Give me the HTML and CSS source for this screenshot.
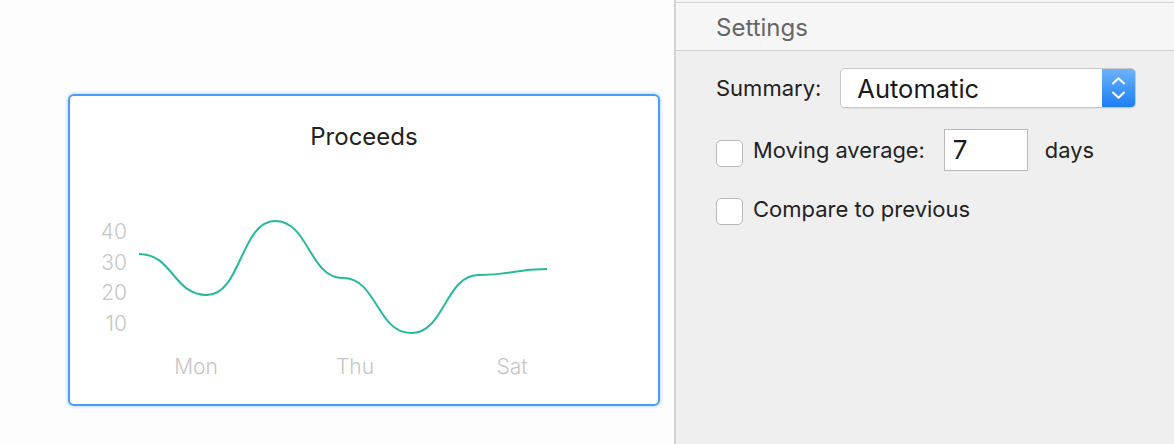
FILE: index.html
```html
<!DOCTYPE html>
<html>
<head>
<meta charset="utf-8">
<link rel="stylesheet" href="styles.css">
</head>
<body>
<div class="app">
  <main class="canvas">
    <section class="card">
      <h2 class="card-title">Proceeds</h2>
      <svg class="chart" width="588" height="253" viewBox="0 0 588 253">
        <g class="y-axis">
          <text x="57" y="88">40</text>
          <text x="57" y="119">30</text>
          <text x="57" y="149">20</text>
          <text x="57" y="180">10</text>
        </g>
        <g class="x-axis">
          <text x="126" y="223">Mon</text>
          <text x="285" y="223">Thu</text>
          <text x="442" y="223">Sat</text>
        </g>
        <path class="line" d="M69,103 C103,103 103,144 137,144 C171,144 171,70 205,70 C239,70 239,127 273,127 C307,127 307,182 341,182 C375,182 375,124 409,124 C443,124 443,118 477,118"/>
      </svg>
    </section>
  </main>
  <aside class="inspector">
    <div class="top-strip"></div>
    <header class="inspector-header">Settings</header>
    <div class="form">
      <div class="row row-summary">
        <span class="label">Summary:</span>
        <div class="popup">
          <span class="popup-value">Automatic</span>
          <span class="popup-arrows">
            <svg width="13" height="22" viewBox="0 0 13 22">
              <path d="M1,6.5 L6.5,1.2 L12,6.5" />
              <path d="M1,15.5 L6.5,20.8 L12,15.5" />
            </svg>
          </span>
        </div>
      </div>
      <div class="row row-average">
        <span class="checkbox"></span>
        <span class="label">Moving average:</span>
        <span class="field">7</span>
        <span class="label days">days</span>
      </div>
      <div class="row row-compare">
        <span class="checkbox"></span>
        <span class="label">Compare to previous</span>
      </div>
    </div>
  </aside>
</div>
</body>
</html>
```
FILE: styles.css
```css
html, body {
  margin: 0;
  padding: 0;
}
body {
  width: 1174px;
  height: 444px;
  overflow: hidden;
  font-family: "Inter", "Liberation Sans", sans-serif;
}
.app {
  display: flex;
  height: 444px;
}
.canvas {
  width: 676px;
  flex: none;
  background: #fdfdfd;
  border-right: 2px solid #d3d3d3;
  padding: 94px 0 0 68px;
  box-sizing: border-box;
}
.card {
  width: 592px;
  height: 312px;
  box-sizing: border-box;
  border: 2px solid #4a9cf6;
  border-radius: 6px;
  background: #fff;
  box-shadow: 0 0 3px 1px rgba(74, 156, 246, 0.35);
}
.card-title {
  margin: 0;
  padding-top: 26px;
  height: 29px;
  line-height: 29px;
  font-size: 24px;
  font-weight: 400;
  text-align: center;
  color: #222;
}
.chart {
  display: block;
}
.chart text {
  font-family: "Inter", "Liberation Sans", sans-serif;
  font-size: 21px;
  font-weight: 300;
  fill: #c6c6c6;
}
.y-axis text {
  text-anchor: end;
}
.x-axis text {
  text-anchor: middle;
}
.line {
  fill: none;
  stroke: #26b99b;
  stroke-width: 2;
}
.inspector {
  flex: 1;
  background: #f0eff0;
  display: flex;
  flex-direction: column;
}
.top-strip {
  height: 2px;
  background: #f6f6f6;
}
.inspector-header {
  height: 45px;
  padding-top: 2px;
  border-top: 1px solid #d2d2d2;
  border-bottom: 1px solid #d2d2d2;
  background: #f6f6f6;
  padding-left: 40px;
  font-size: 24px;
  line-height: 45px;
  color: #666;
}
.form {
  padding: 17px 0 0 40px;
  display: flex;
  flex-direction: column;
}
.row {
  display: flex;
  align-items: center;
}
.label {
  font-size: 22px;
  color: #222;
}
.row-summary {
  height: 40px;
}
.popup {
  margin-left: 19px;
  width: 296px;
  height: 40px;
  box-sizing: border-box;
  border: 1px solid #c9c9c9;
  border-radius: 5px;
  background: #fff;
  display: flex;
  align-items: center;
  box-shadow: 0 1px 1px rgba(0,0,0,0.06);
  overflow: hidden;
}
.popup-value {
  flex: 1;
  padding-left: 16px;
  font-size: 25.5px;
  color: #1a1a1a;
}
.popup-arrows {
  width: 33px;
  height: 100%;
  background: linear-gradient(#6db3fb, #1b7ff6);
  display: flex;
  align-items: center;
  justify-content: center;
}
.popup-arrows path {
  fill: none;
  stroke: #fff;
  stroke-width: 2;
  stroke-linecap: round;
  stroke-linejoin: round;
}
.row-average {
  margin-top: 21px;
  height: 42px;
}
.checkbox {
  width: 27px;
  height: 27px;
  box-sizing: border-box;
  border: 1px solid #b9b9b9;
  border-radius: 5px;
  background: #fff;
  margin-right: 10px;
  flex: none;
}
.row-average .checkbox {
  margin-top: 7px;
}
.row-average .label {
  font-size: 21.85px;
}
.field {
  margin-left: 19px;
  width: 84px;
  height: 42px;
  box-sizing: border-box;
  border: 1px solid #b9b9b9;
  background: #fff;
  padding-left: 8px;
  font-size: 26px;
  line-height: 40px;
  color: #1a1a1a;
}
.days {
  margin-left: 17px;
}
.row-compare {
  margin-top: 21px;
}
.row-compare .checkbox {
  margin-top: 6px;
}
```
